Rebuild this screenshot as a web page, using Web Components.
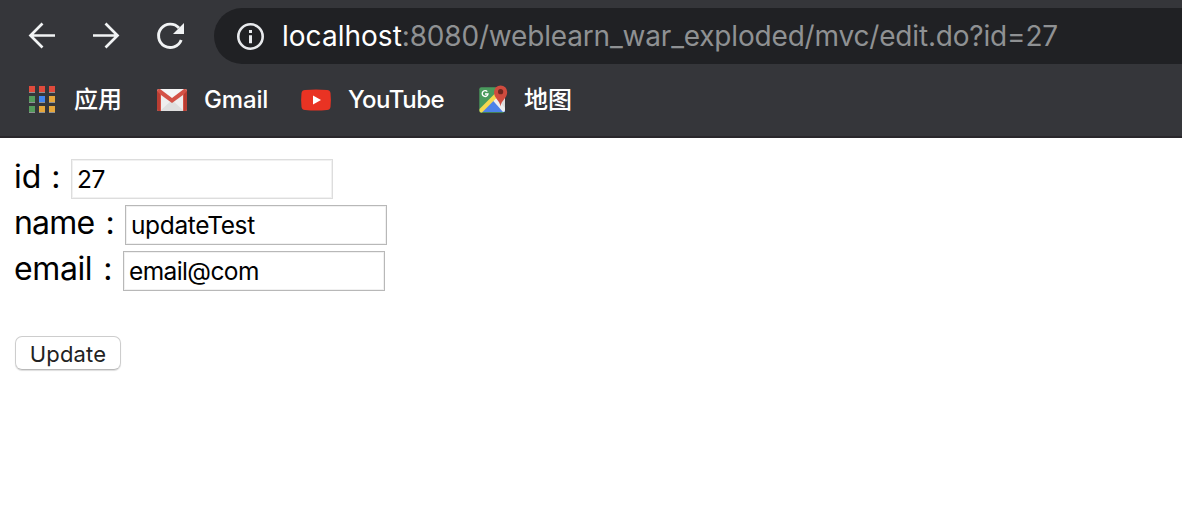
<!DOCTYPE html>
<html lang="zh-CN">
<head>
<meta charset="utf-8">
<title>Edit</title>
<style>
body{margin:0;background:#fff;font-family:Inter,"Noto Sans CJK SC",sans-serif;overflow:hidden}
</style>
</head>
<body>
<edit-window></edit-window>
<script>
function define(name, html){
  const t=document.createElement('template');
  t.innerHTML=html;
  customElements.define(name,class extends HTMLElement{
    constructor(){super();this.attachShadow({mode:'open'}).append(t.content.cloneNode(true));}
  });
}

define('nav-buttons',`<style>
:host{display:flex;align-items:center;gap:32px;height:56px;padding-left:26px;width:214px;box-sizing:border-box;flex:none}
svg{display:block;width:32px;height:32px;flex:none;fill:none;stroke:#f1f3f4;stroke-width:2.7}
</style>
<svg viewBox="0 0 32 32"><path d="M29 15.500H4.500M16.500 3.500l-12 12 12 12"/></svg>
<svg viewBox="0 0 32 32"><path d="M3 15.500h24.500M15.500 3.500l12 12-12 12"/></svg>
<svg viewBox="0 0 32 32"><path d="M27.200 20A11.700 11.700 0 1 1 25 8" stroke-width="2.900"/><path d="M30 3v11H19z" fill="#f1f3f4" stroke="none"/></svg>`);

define('address-bar',`<style>
:host{display:flex;align-items:center;flex:1;height:56px;background:#202124;border-radius:28px 0 0 28px;padding-left:21px;box-sizing:border-box}
svg{width:32px;height:32px;flex:none}
.u{margin-left:15px;font-size:28px;line-height:57px;color:#8f9193;white-space:pre;letter-spacing:-.18px}
b{font-weight:400;color:#fff;letter-spacing:.02px}
</style>
<svg viewBox="0 0 32 32" fill="none"><circle cx="15.500" cy="16.500" r="12.200" stroke="#e8eaed" stroke-width="2.600"/><path d="M14 10h3v3h-3zM14 15.200h3v8h-3z" fill="#e8eaed"/></svg>
<div class="u"><b><slot name="host"></slot></b><slot></slot></div>`);

define('book-mark',`<style>
:host{display:flex;align-items:center;height:40px;color:#fff;font-size:24px;font-weight:450;line-height:30px;white-space:pre}
::slotted(svg){display:block;width:32px;height:32px;flex:none;margin-right:16px}
div{padding-top:2px}
</style><slot name="icon"></slot><div><slot></slot></div>`);

define('bookmark-bar',`<style>
:host{display:flex;height:64px;box-sizing:border-box;padding:7px 0 0 26px}
book-mark{flex:none;letter-spacing:var(--ls,0)}
.cjk{display:block;line-height:28px;padding-bottom:0}
</style>
<book-mark style="width:130px"><svg slot="icon" viewBox="0 0 32 32"><g fill="#8e9195"><path d="M3 9h6v1H3zM13 9h6v1h-6zM23 9h6v1h-6zM3 19h6v1H3zM13 19h6v1h-6zM23 19h6v1h-6zM3 29h6v1H3zM13 29h6v1h-6zM23 29h6v1h-6z"/></g><path fill="#e04b3c" d="M3 3h6v6H3zM13 3h6v6h-6zM23 3h6v6h-6z"/><path fill="#559b5c" d="M3 13h6v6H3zM3 23h6v6H3z"/><path fill="#4285f0" d="M13 13h6v6h-6z"/><path fill="#e5a63b" d="M23 13h6v6h-6zM13 23h6v6h-6zM23 23h6v6h-6z"/></svg><span class="cjk">应用</span></book-mark>
<book-mark style="width:144px;--ls:-.15px"><svg slot="icon" viewBox="0 0 32 32"><rect x="1" y="6" width="30" height="22" rx="2" fill="#eee"/><path d="M4 28l12-11 12 11z" fill="#dedede"/><path d="M5 6h22L16 15z" fill="#f5f5f5"/><path d="M1 8v18q0 2 2 2h2V12l11 8 11-8v16h2q2 0 2-2V8q0-2-2-2h-1L16 15 4 6H3Q1 6 1 8" fill="#d45246"/><path d="M1 8v18q0 2 2 2h1V11zM31 8v18q0 2-2 2h-1V11z" fill="#b93d32"/></svg>Gmail</book-mark>
<book-mark style="width:176px;--ls:-.5px"><svg slot="icon" viewBox="0 0 32 32"><path d="M5 7Q16 6 27 7q3 0 3.500 3 .8 7 0 14-.5 3-3.500 3-11 1-22 0-3 0-3.500-3-.8-7 0-14Q2 7 5 7" fill="#e93323"/><path d="M13 12.500l8 4.500-8 4.500z" fill="#fff"/></svg>YouTube</book-mark>
<book-mark><svg slot="icon" viewBox="0 0 32 32"><rect x="3.300" y="4.300" width="25.400" height="25.400" rx="2" fill="#4a9b5d"/><path d="M4 29L18 15l11 12v2H4z" fill="#4d82e8"/><path d="M17.500 15.500l4-4L29 13v15z" fill="#dcdcdc"/><path d="M16 16.500l3-3L29 25v2q0 2-2 2z" fill="#eee"/><path d="M3.500 26L19 10.500l3 3L6 29.500H5q-1.500 0-1.500-2z" fill="#f5d84f"/><path d="M24.500 23.500c-.5-6-6.500-8-6.500-14.500a6.600 6.600 0 0 1 13.200 0c0 6.500-6.200 8.500-6.700 14.500z" fill="#d04b3e"/><circle cx="24.600" cy="8.700" r="2.600" fill="#70261f"/><path d="M11.300 8.600A2.900 2.900 0 1 0 12 11H9" fill="none" stroke="#fff" stroke-width="1.400"/></svg><span class="cjk">地图</span></book-mark>`);

define('browser-chrome',`<style>
:host{display:block;height:138px;box-sizing:border-box;background:#35363a;border-bottom:2px solid #29272b}
.top{display:flex;padding-top:8px;height:72px;box-sizing:border-box}
</style>
<div class="top"><nav-buttons></nav-buttons><address-bar><span slot="host">localhost</span>:8080/weblearn_war_exploded/mvc/edit.do?id=27</address-bar></div>
<bookmark-bar></bookmark-bar>`);

define('form-row',`<style>
:host{display:flex;height:46px;align-items:flex-start;color:#000}
.l{width:var(--w);font-size:32px;line-height:36px;white-space:pre;flex:none;letter-spacing:var(--ls,0);word-spacing:var(--ws,0)}
.f{width:262px;height:40px;box-sizing:border-box;border:1px solid var(--b,#b8b8b8);box-shadow:inset 0 0 0 1px #f1f1f1;padding-left:5px;font-size:24.500px;line-height:39px;white-space:pre;letter-spacing:var(--fs,0)}
</style><div class="l"><slot name="label"></slot></div><div class="f"><slot></slot></div>`);

define('push-button',`<style>
:host{display:flex;width:106px;height:34px;box-sizing:border-box;border:1px solid #cdcdcd;border-bottom-color:#b9b9b9;border-radius:7px;box-shadow:0 1px 1px #0002;align-items:center;justify-content:center;font-size:22px;color:#222;letter-spacing:.2px;padding-top:1px}
</style><slot></slot>`);

define('edit-form',`<style>
:host{display:block;padding:21px 0 0 14px}
push-button{margin:39px 0 0 1px}
</style>
<form-row style="--w:57px;--b:#ddd;--fs:-.5px;--ws:1px"><span slot="label">id :</span>27</form-row>
<form-row style="--w:111px;--ls:-.8px;--ws:3px;--fs:-.37px"><span slot="label">name :</span>updateTest</form-row>
<form-row style="--w:109px;--ls:-.4px;--ws:2.500px;--fs:-.6px"><span slot="label">email :</span>email@com</form-row>
<push-button>Update</push-button>`);

define('edit-window',`<style>:host{display:block;height:512px}</style><browser-chrome></browser-chrome><edit-form></edit-form>`);
</script>
</body>
</html>
